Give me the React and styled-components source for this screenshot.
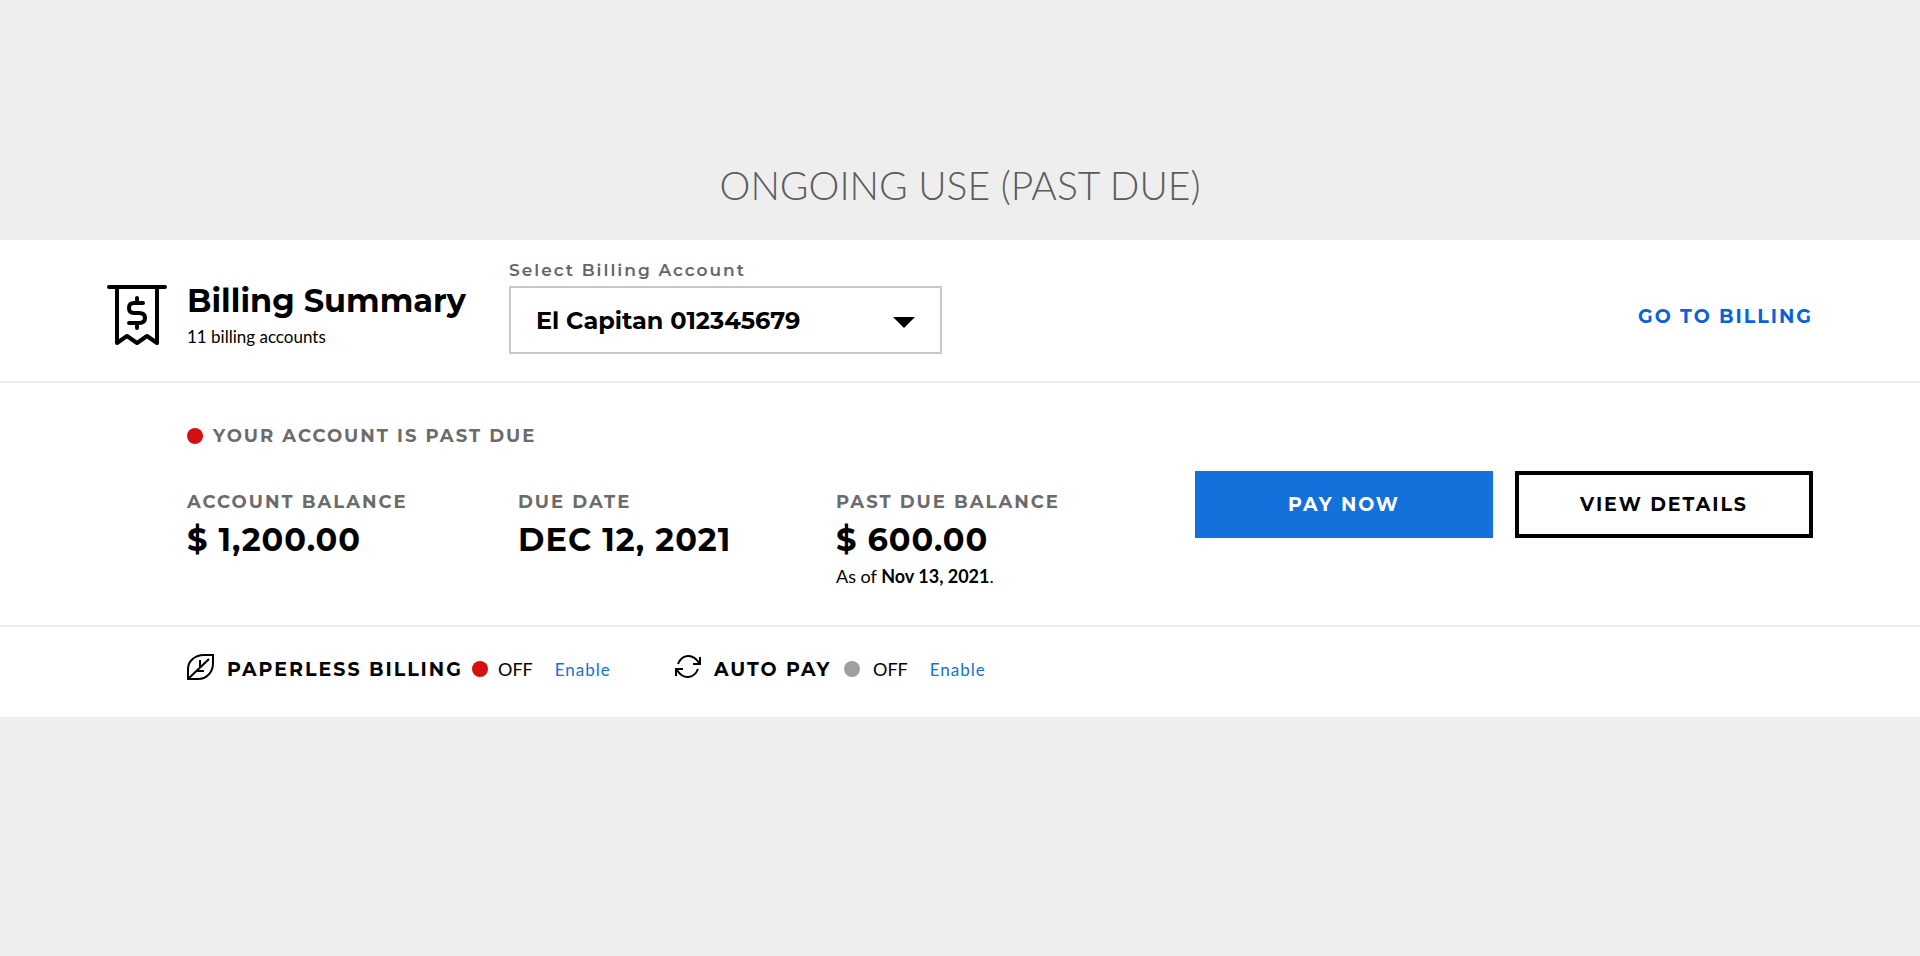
import React from "react";
import styled, { createGlobalStyle } from "styled-components";

const display = `Montserrat, Inter, "Liberation Sans", sans-serif`;
const body = `Lato, "Liberation Sans", sans-serif`;

const GlobalStyle = createGlobalStyle`
  *, *::before, *::after { box-sizing: border-box; }
  body { margin: 0; background: #eeeeee; color: #000; font-family: ${body}; font-size: 18px; line-height: 24px; }
`;

const PageTitle = styled.h1`
  margin: 0;
  padding: 161px 24px 31px;
  font-size: 39px;
  line-height: 48px;
  font-weight: 300;
  text-align: center;
  color: #5c5c5c;
`;

const Card = styled.section`
  background: #fff;
`;

const Header = styled.header`
  display: flex;
  align-items: flex-start;
  min-height: 143px;
  padding: 18px 107px 0;
  border-bottom: 2px solid #eeeeee;
`;

const ReceiptIcon = styled.svg`
  flex: none;
  width: 60px;
  height: 62px;
  margin: 26px 20px 0 0;
`;

const Heading = styled.div`
  width: 322px;
  padding-top: 23px;
`;

const CardTitle = styled.h2`
  margin: 0;
  font: 700 32px/40px ${display};
  white-space: nowrap;
`;

const Note = styled.p`
  margin: 0;
  padding-top: 4px;
  font-size: 17px;
  white-space: nowrap;
`;

const Field = styled.div`
  display: flex;
  flex-direction: column;
  width: 433px;
`;

const FieldLabel = styled.label`
  height: 28px;
  font: 600 17px/24px ${display};
  letter-spacing: 2px;
  color: #666;
`;

const SelectWrap = styled.div`
  position: relative;
`;

const Select = styled.select`
  appearance: none;
  display: block;
  width: 100%;
  height: 68px;
  padding: 2px 60px 0 25px;
  border: 2px solid #c8c8c8;
  border-radius: 0;
  background: #fff;
  color: #000;
  font: 700 24px/32px ${display};
`;

const Caret = styled.svg`
  position: absolute;
  right: 27px;
  top: 31px;
  width: 22px;
  height: 11px;
  pointer-events: none;
`;

const HeaderLink = styled.a`
  margin-left: auto;
  padding-top: 47px;
  font: 700 19px/24px ${display};
  letter-spacing: 2px;
  color: #0a62d8;
  text-decoration: none;
  white-space: nowrap;
`;

const Summary = styled.div`
  min-height: 244px;
  padding: 41px 107px 0 187px;
  border-bottom: 2px solid #eeeeee;
`;

const Label = styled.span`
  font: 700 18px/24px ${display};
  letter-spacing: 2px;
  color: #6b6b6b;
  white-space: nowrap;
`;

const Status = styled.div`
  display: flex;
  align-items: center;
  gap: 10px;
`;

const Dot = styled.span`
  flex: none;
  width: 16px;
  height: 16px;
  border-radius: 50%;
  background: ${(p) => p.$color};
`;

const Row = styled.div`
  display: flex;
  align-items: flex-start;
  justify-content: space-between;
  padding-top: 23px;
`;

const Metrics = styled.dl`
  display: grid;
  grid-template-columns: 331px 318px auto;
  margin: 0;
  padding-top: 19px;
`;

const Value = styled.dd`
  margin: 0;
  padding-top: 6px;
  font: 700 32px/40px ${display};
  letter-spacing: 1px;
  white-space: nowrap;
`;

const Detail = styled.dd`
  margin: 0;
  padding-top: 4px;
`;

const Actions = styled.div`
  display: flex;
  gap: 22px;
`;

const Button = styled.button`
  width: 298px;
  height: 67px;
  padding: 0;
  border: 4px solid ${(p) => (p.$primary ? "#1470db" : "#000")};
  background: ${(p) => (p.$primary ? "#1470db" : "#fff")};
  color: ${(p) => (p.$primary ? "#fff" : "#000")};
  font: 700 19px/24px ${display};
  letter-spacing: 2px;
`;

const Footer = styled.footer`
  display: flex;
  min-height: 90px;
  padding: 27px 107px 0 187px;
`;

const Setting = styled.div`
  display: flex;
  align-items: flex-start;
  width: ${(p) => p.$width}px;
`;

const SettingIcon = styled.svg`
  flex: none;
  width: 28px;
  height: 26px;
  margin-right: 12px;
`;

const SettingName = styled.span`
  width: ${(p) => p.$width}px;
  padding-top: 4px;
  font: 700 19px/24px ${display};
  letter-spacing: 2px;
  white-space: nowrap;
`;

const State = styled.span`
  display: flex;
  align-items: center;
  gap: ${(p) => p.$gap}px;
  margin-right: 22px;
  padding-top: 3px;
`;

const EnableLink = styled.a`
  padding-top: 4px;
  color: #1470db;
  font-size: 17px;
  text-decoration: none;
  letter-spacing: 1px;
`;

export default function App() {
  return (
    <>
      <GlobalStyle />
      <main>
        <PageTitle>ONGOING USE (PAST DUE)</PageTitle>
        <Card>
          <Header>
            <ReceiptIcon viewBox="0 0 60 62" fill="none" stroke="#000" strokeWidth="4" strokeLinecap="round" strokeLinejoin="round" aria-hidden="true">
              <path d="M2 3H58M10 3V59L20 52L30 59L40 52L50 59V3" />
              <path d="M36 19H27Q22 19 22 24Q22 29 27 29H32Q38 29 38 34Q38 39 32 39H22M30 14V19M30 39V44" />
            </ReceiptIcon>
            <Heading>
              <CardTitle>Billing Summary</CardTitle>
              <Note>11 billing accounts</Note>
            </Heading>
            <Field>
              <FieldLabel htmlFor="account">Select Billing Account</FieldLabel>
              <SelectWrap>
                <Select id="account">
                  <option>El Capitan 012345679</option>
                </Select>
                <Caret viewBox="0 0 22 11" aria-hidden="true">
                  <path d="M0 0H22L11 11Z" />
                </Caret>
              </SelectWrap>
            </Field>
            <HeaderLink href="#billing">GO TO BILLING</HeaderLink>
          </Header>

          <Summary>
            <Status>
              <Dot $color="#d41010" />
              <Label>YOUR ACCOUNT IS PAST DUE</Label>
            </Status>
            <Row>
              <Metrics>
                <div>
                  <Label as="dt">ACCOUNT BALANCE</Label>
                  <Value>$ 1,200.00</Value>
                </div>
                <div>
                  <Label as="dt">DUE DATE</Label>
                  <Value>DEC 12, 2021</Value>
                </div>
                <div>
                  <Label as="dt">PAST DUE BALANCE</Label>
                  <Value>$ 600.00</Value>
                  <Detail>As of <b>Nov 13, 2021</b>.</Detail>
                </div>
              </Metrics>
              <Actions>
                <Button type="button" $primary>PAY NOW</Button>
                <Button type="button">VIEW DETAILS</Button>
              </Actions>
            </Row>
          </Summary>

          <Footer>
            <Setting $width={487}>
              <SettingIcon viewBox="0 0 28 26" fill="none" stroke="#000" strokeWidth="2" aria-hidden="true">
                <path d="M1 25V15C1 7 8 1 17 1H26V9C26 19 19 25 11 25Z" />
                <path d="M1 25L22 5M13 6V13M10 17H17" />
              </SettingIcon>
              <SettingName $width={245}>PAPERLESS BILLING</SettingName>
              <State $gap={10}><Dot $color="#d41010" />OFF</State>
              <EnableLink href="#paperless">Enable</EnableLink>
            </Setting>
            <Setting>
              <SettingIcon viewBox="0 0 28 26" fill="none" stroke="#000" strokeWidth="2" aria-hidden="true">
                <path d="M4 10C8 0 19 -1 25 9M26 3V10H19" />
                <path d="M24 15C20 25 9 26 3 16M2 22V15H9" />
              </SettingIcon>
              <SettingName $width={130}>AUTO PAY</SettingName>
              <State $gap={13}><Dot $color="#9f9f9f" />OFF</State>
              <EnableLink href="#autopay">Enable</EnableLink>
            </Setting>
          </Footer>
        </Card>
      </main>
    </>
  );
}
